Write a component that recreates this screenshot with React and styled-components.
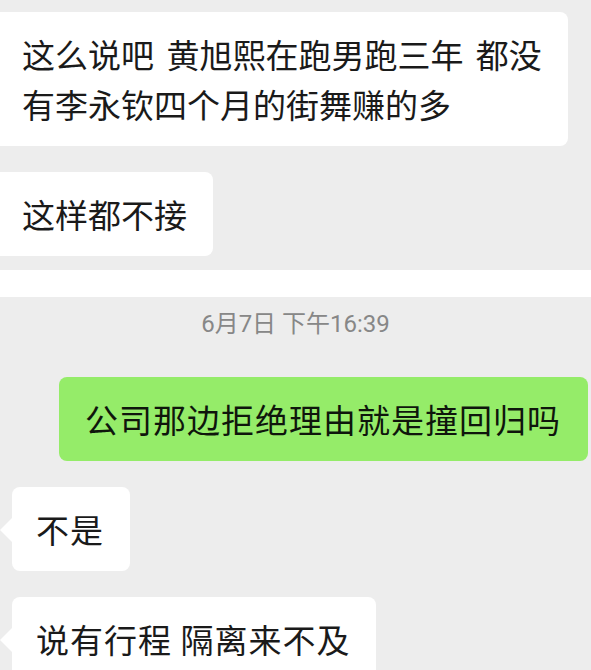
import React from 'react';
import styled, { createGlobalStyle } from 'styled-components';

const GlobalStyle = createGlobalStyle`
  body {
    margin: 0;
    background: #ffffff;
    overflow: hidden;
  }
`;

const Page = styled.div`
  width: 591px;
  height: 670px;
  overflow: hidden;
`;

const Screen = styled.section`
  display: flex;
  flex-direction: column;
  align-items: flex-start;
  gap: 26px;
  background: #ededed;
  height: ${(p) => p.$height}px;
  margin-top: ${(p) => p.$offset || 0}px;
  padding-top: 12px;
  box-sizing: border-box;
`;

const TimeStamp = styled.div`
  align-self: stretch;
  text-align: center;
  font-family: Roboto, "Noto Sans CJK SC", sans-serif;
  font-size: 24px;
  line-height: 30px;
  color: #878787;
  margin-bottom: 12px;
`;

const Bubble = styled.div`
  position: relative;
  font-family: "Noto Sans CJK SC", "Noto Sans", sans-serif;
  font-size: 33px;
  line-height: 50px;
  letter-spacing: ${(p) => p.$spacing || 0}px;
  word-spacing: ${(p) => p.$wordGap || 0}px;
  color: ${(p) => (p.$mine ? '#0f160c' : '#1a1a1a')};
  background: ${(p) => (p.$mine ? '#95ec69' : '#ffffff')};
  border-radius: 8px;
  padding: 17px 26px 17px 24px;
  white-space: nowrap;

  &::before {
    content: ${(p) => (p.$tail ? "''" : 'none')};
    position: absolute;
    left: -12px;
    top: 31px;
    border-style: solid;
    border-width: 12px 12px 12px 0;
    border-color: transparent #ffffff transparent transparent;
  }
`;

const CroppedBubble = styled(Bubble)`
  margin-left: -12px;
  padding-left: 34px;
`;

const SentBubble = styled(Bubble)`
  align-self: flex-end;
  margin-right: 3px;
  padding: 17px 27px 17px 26px;
`;

const ReceivedBubble = styled(Bubble)`
  margin-left: 12px;
`;

const App = () => {
  return (
    <Page>
      <GlobalStyle />
      <Screen $height={270}>
        <CroppedBubble $wordGap={5}>
          这么说吧 黄旭熙在跑男跑三年 都没
          <br />
          有李永钦四个月的街舞赚的多
        </CroppedBubble>
        <CroppedBubble>这样都不接</CroppedBubble>
      </Screen>
      <Screen $height={373} $offset={27}>
        <TimeStamp>6月7日 下午16:39</TimeStamp>
        <SentBubble $mine $spacing={1}>公司那边拒绝理由就是撞回归吗</SentBubble>
        <ReceivedBubble $tail $spacing={1}>不是</ReceivedBubble>
        <ReceivedBubble $tail $spacing={1}>说有行程 隔离来不及</ReceivedBubble>
      </Screen>
    </Page>
  );
};

export default App;
